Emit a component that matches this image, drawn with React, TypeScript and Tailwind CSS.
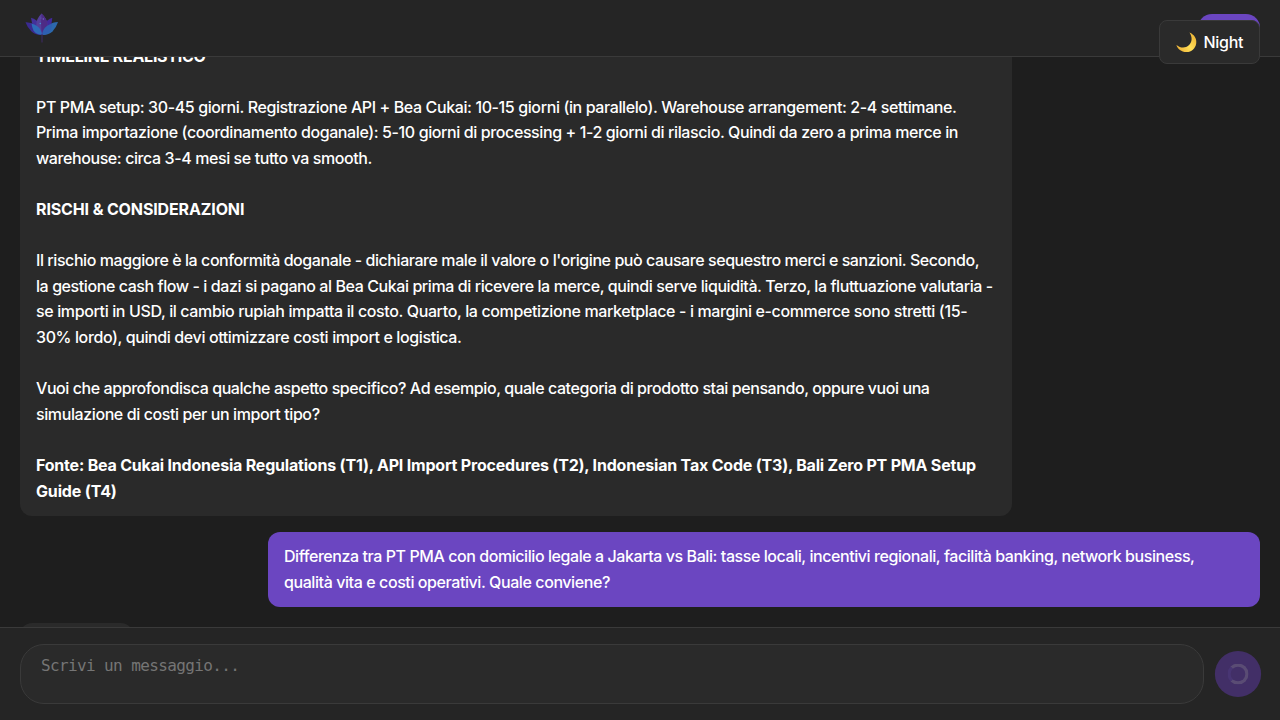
type Line = { text: string; tracking: string };

const timeline: Line[] = [
  { text: "PT PMA setup: 30-45 giorni. Registrazione API + Bea Cukai: 10-15 giorni (in parallelo). Warehouse arrangement: 2-4 settimane.", tracking: "tracking-[-0.39px]" },
  { text: "Prima importazione (coordinamento doganale): 5-10 giorni di processing + 1-2 giorni di rilascio. Quindi da zero a prima merce in", tracking: "tracking-[-0.395px]" },
  { text: "warehouse: circa 3-4 mesi se tutto va smooth.", tracking: "tracking-[-0.41px]" },
];

const risks: Line[] = [
  { text: "Il rischio maggiore è la conformità doganale - dichiarare male il valore o l'origine può causare sequestro merci e sanzioni. Secondo,", tracking: "tracking-[-0.434px]" },
  { text: "la gestione cash flow - i dazi si pagano al Bea Cukai prima di ricevere la merce, quindi serve liquidità. Terzo, la fluttuazione valutaria -", tracking: "tracking-[-0.419px]" },
  { text: "se importi in USD, il cambio rupiah impatta il costo. Quarto, la competizione marketplace - i margini e-commerce sono stretti (15-", tracking: "tracking-[-0.371px]" },
  { text: "30% lordo), quindi devi ottimizzare costi import e logistica.", tracking: "tracking-[-0.385px]" },
];

const followUp: Line[] = [
  { text: "Vuoi che approfondisca qualche aspetto specifico? Ad esempio, quale categoria di prodotto stai pensando, oppure vuoi una", tracking: "tracking-[-0.43px]" },
  { text: "simulazione di costi per un import tipo?", tracking: "tracking-[-0.4px]" },
];

const sources: Line[] = [
  { text: "Fonte: Bea Cukai Indonesia Regulations (T1), API Import Procedures (T2), Indonesian Tax Code (T3), Bali Zero PT PMA Setup", tracking: "tracking-[-0.2px]" },
  { text: "Guide (T4)", tracking: "tracking-[-0.15px]" },
];

const question: Line[] = [
  { text: "Differenza tra PT PMA con domicilio legale a Jakarta vs Bali: tasse locali, incentivi regionali, facilità banking, network business,", tracking: "tracking-[-0.43px]" },
  { text: "qualità vita e costi operativi. Quale conviene?", tracking: "tracking-[-0.415px]" },
];

function Paragraph({ lines, bold = false }: { lines: Line[]; bold?: boolean }) {
  return (
    <p className={bold ? "font-[650]" : "font-[450]"}>
      {lines.map((line) => (
        <span key={line.text} className={`block whitespace-nowrap ${line.tracking}`}>
          {line.text}
        </span>
      ))}
    </p>
  );
}

function Lotus() {
  return (
    <svg width="36" height="32" viewBox="0 0 36 32" aria-hidden="true">
      <path d="M1.500 10.300 Q7 10 11 13 L18 22.800 Q12 23.500 7.500 19.500 Q3.500 16 1.500 10.300Z" fill="#3a2a90" />
      <path d="M34 10 Q28.500 10 25 13 L18 22.800 Q24 23.500 28.500 19.500 Q32 16 34 10Z" fill="#2c68ac" />
      <path d="M7 5.800 Q13 7.500 15.500 12 L18 22.800 Q8 18 7 5.800Z" fill="#43309a" />
      <path d="M28.300 5.800 Q23 7.500 20.500 12 L18 22.800 Q28 18 28.300 5.800Z" fill="#43289a" />
      <path d="M17.500 1.500 Q23.500 7 23.500 13 Q23 18 18 22.800 Q12.500 18 12.300 13 Q12 7 17.500 1.500Z" fill="#54409a" />
      <path d="M17.500 1.500 Q23.500 7 23.500 13 Q23 18 18 22.800 Q16.500 14 17.500 1.500Z" fill="#4d2b86" />
      <path d="M7.500 11.500 Q13.500 13 16 17 Q17.800 20 18 22.800 Q11.500 22.500 9.500 18.500 Q8 15.500 7.500 11.500Z" fill="#2e6ab8" />
      <path d="M28 11.500 Q22.500 13 20 17 Q18.200 20 18 22.800 Q24.500 22.500 26.500 18.500 Q28 15.500 28 11.500Z" fill="#2e5fb0" />
      <path d="M18 22V30.500" stroke="#3f2a68" strokeWidth="1" />
      <circle cx="16.300" cy="11.500" r=".8" fill="#3f8fd0" />
      <circle cx="19.300" cy="7" r=".7" fill="#7470c4" />
      <circle cx="17" cy="6" r=".5" fill="#6e62b8" />
    </svg>
  );
}

function Moon() {
  return (
    <svg width="21" height="21" viewBox="0 0 21 21" aria-hidden="true">
      <defs>
        <linearGradient id="moon" x1="0.1" y1="0.9" x2="0.9" y2="0.3">
          <stop offset="0" stopColor="#efb236" />
          <stop offset="0.55" stopColor="#ffdf58" />
          <stop offset="1" stopColor="#f1bd3c" />
        </linearGradient>
      </defs>
      <path d="M13.500.5C18.200 2.500 21 6.800 20.200 11.500C19.300 17 15.200 20.300 10.300 20.100C5.400 19.900 1.600 17.200.4 13C4.600 16.300 9.400 16.400 12.800 13.300C16.400 10 16.500 5 13.500.5Z" fill="url(#moon)" />
    </svg>
  );
}

export default function App() {
  return (
    <div className="flex h-screen flex-col overflow-hidden bg-[#1e1e1e] font-['Inter',sans-serif] text-base leading-[25.6px] text-white">
      <header className="flex h-[57px] shrink-0 items-start justify-between border-b border-[#3a3a3a] bg-[#252525] px-5">
        <div className="pt-3 pl-1">
          <Lotus />
        </div>
        <div className="mt-3.5 h-7 w-[62px] rounded-full bg-[#6b46c1]" />
      </header>

      <main className="flex min-h-0 flex-1 flex-col gap-4 overflow-hidden px-5">
        <section className="mt-[-25.5px] flex w-[992px] shrink-0 flex-col gap-[25.6px] rounded-xl bg-[#2a2a2a] px-4 py-3">
          <h2 className="font-[650] tracking-[-0.26px]">TIMELINE REALISTICO</h2>
          <Paragraph lines={timeline} />
          <h2 className="font-[650] tracking-[-0.13px]">{"RISCHI & CONSIDERAZIONI"}</h2>
          <Paragraph lines={risks} />
          <Paragraph lines={followUp} />
          <Paragraph lines={sources} bold />
        </section>
        <section className="w-[992px] shrink-0 self-end rounded-xl bg-[#6b46c1] px-4 py-3">
          <Paragraph lines={question} />
        </section>
        <div className="h-12 w-[113px] shrink-0 rounded-xl bg-[#2a2a2a]" />
      </main>

      <footer className="flex h-[93px] shrink-0 items-center gap-3 border-t border-[#3a3a3a] bg-[#252525] px-5">
        <textarea
          className="h-[60px] flex-1 resize-none rounded-3xl border border-[#3a3a3a] bg-[#2a2a2a] px-5 py-3 font-['DejaVu_Sans_Mono',monospace] text-[16px] leading-[18px] tracking-[-0.62px] outline-none placeholder:text-[#757575]"
          placeholder="Scrivi un messaggio..."
        />
        <button className="flex size-11 scale-105 items-center justify-center rounded-full bg-[#5f39a9] opacity-50" aria-label="Invio in corso">
          <span className="size-5 rounded-full border-[3px] border-white/30 border-l-[#6b46c1]" />
        </button>
      </footer>

      <div className="fixed top-5 right-5 flex h-11 w-[101px] items-center gap-[7px] rounded-lg border border-[#3a3a3a] bg-[#2a2a2a] pt-px pl-[15.5px]">
        <Moon />
        <span className="font-[450] tracking-[-0.3px]">Night</span>
      </div>
    </div>
  );
}
